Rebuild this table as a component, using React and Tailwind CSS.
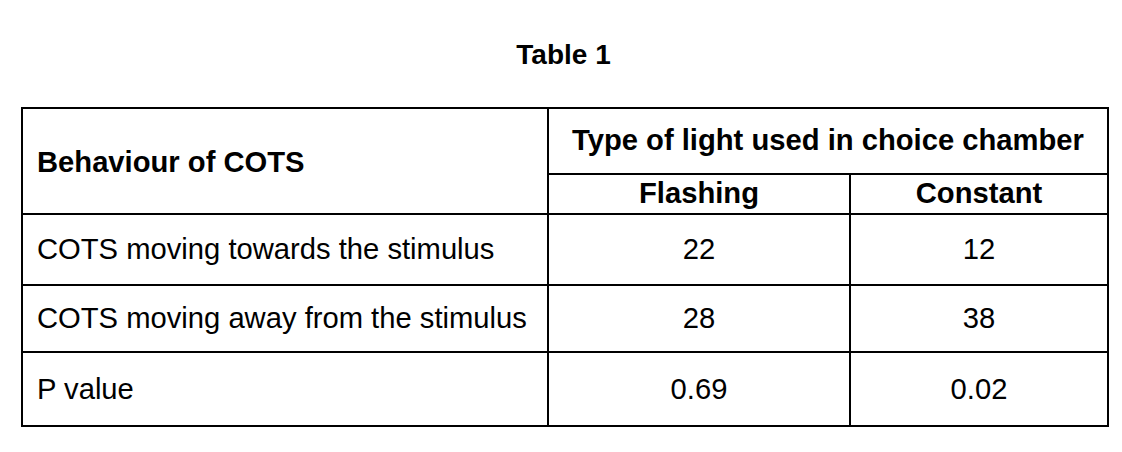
export default function App() {
  const rows = [
    { label: "COTS moving towards the stimulus", flashing: "22", constant: "12" },
    { label: "COTS moving away from the stimulus", flashing: "28", constant: "38" },
    { label: "P value", flashing: "0.69", constant: "0.02" },
  ];

  return (
    <div
      className="w-[1122px] h-[452px] bg-white text-black"
      style={{ fontFamily: '"Liberation Sans", Arial, sans-serif' }}
    >
      {/* title */}
      <div className="h-[107px] pt-[41px] text-center">
        <h1 className="text-[28px] font-bold leading-[28px] pl-[5px]">Table 1</h1>
      </div>

      {/* table: black grid with 2px gaps = borders */}
      <div className="ml-[21px] w-[1088px] grid grid-cols-[524px_300px_256px] grid-rows-[64px_38px_69px_65px_72px] gap-[2px] p-[2px] bg-black text-[29.2px]">
        <div className="row-span-2 bg-white flex items-center pl-[14px] pt-[4px] font-bold">
          Behaviour of COTS
        </div>
        <div className="col-span-2 bg-white flex items-center justify-center font-bold">
          Type of light used in choice chamber
        </div>
        <div className="bg-white flex items-center justify-center font-bold">Flashing</div>
        <div className="bg-white flex items-center justify-center font-bold">Constant</div>

        {rows.map((r) => (
          <Row key={r.label} {...r} />
        ))}
      </div>
    </div>
  );
}

function Row({ label, flashing, constant }) {
  return (
    <>
      <div className="bg-white flex items-center pl-[14px] pt-[1px]">{label}</div>
      <div className="bg-white flex items-center justify-center pt-[1px]">{flashing}</div>
      <div className="bg-white flex items-center justify-center pt-[1px]">{constant}</div>
    </>
  );
}
